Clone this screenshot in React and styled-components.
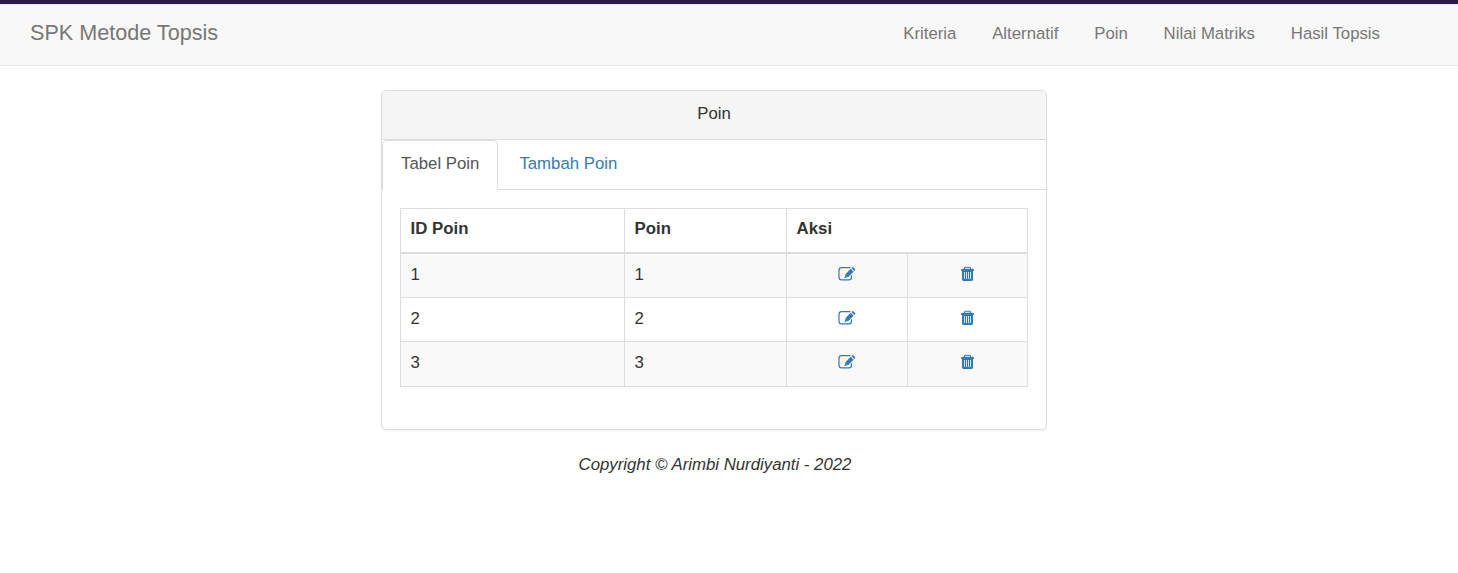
import React from 'react';
import styled, { createGlobalStyle } from 'styled-components';

const GlobalStyle = createGlobalStyle`
  *, *::before, *::after { box-sizing: border-box; }
  body {
    margin: 0;
    background: #fff;
    color: #333;
    font: 16.8px/24px "Liberation Sans", Arial, sans-serif;
  }
`;

const Text = styled.span`
  display: inline-block;
  white-space: nowrap;
`;

const Navbar = styled.nav`
  display: flex;
  justify-content: space-between;
  height: 66px;
  padding: 17px 78px 0 30px;
  background: #f8f8f8;
  border-top: 4px solid #2b1b4e;
  border-bottom: 1px solid #e7e7e7;
  box-shadow: inset 0 1px 0 #e7e7e7;
  color: #777;
`;

const Brand = styled.a`
  font-size: 21.6px;
`;

const Menu = styled.ul`
  display: flex;
  gap: 35.8px;
  margin: 0;
  padding: 1px 0 0;
  list-style: none;
`;

const Panel = styled.section`
  width: 666px;
  height: 340px;
  margin: 24px 0 0 381px;
  background: #fff;
  border: 1px solid #ddd;
  border-radius: 5px;
  box-shadow: 0 1px 1px rgba(0, 0, 0, 0.05);
`;

const PanelHeading = styled.header`
  height: 49px;
  padding-top: 11px;
  background: #f5f5f5;
  border-bottom: 1px solid #ddd;
  border-radius: 4px 4px 0 0;
  text-align: center;
`;

const Tabs = styled.div`
  display: flex;
  height: 50px;
  border-bottom: 1px solid #ddd;
`;

const Tab = styled.a`
  height: 50px;
  padding: 11px 18px 0;
  border: 1px solid ${(p) => (p.$active ? '#ddd' : 'transparent')};
  border-bottom-color: ${(p) => (p.$active ? '#fff' : 'transparent')};
  border-radius: 5px 5px 0 0;
  margin-right: 2px;
  background: ${(p) => (p.$active ? '#fff' : 'transparent')};
  color: ${(p) => (p.$active ? '#555' : '#337ab7')};
`;

const Table = styled.div`
  margin: 18px;
  border: solid #ddd;
  border-width: 1px 0 0 1px;
`;

const Row = styled.div`
  display: grid;
  grid-template-columns: ${(p) => (p.$head ? '224px 162px 241px' : '224px 162px 121px 120px')};
  height: ${(p) => p.$height || 44}px;
  background: ${(p) => (p.$striped ? '#f9f9f9' : '#fff')};
  font-weight: ${(p) => (p.$head ? 700 : 400)};
`;

const Cell = styled.div`
  padding: ${(p) => (p.$head ? '8px' : '9px')} 10px 0 9.6px;
  border: solid #ddd;
  border-width: 0 1px ${(p) => (p.$head ? 2 : 1)}px 0;
`;

const ActionCell = styled(Cell)`
  display: flex;
  justify-content: center;
  padding: 12px 0 0;
  color: #337ab7;
`;

const Icon = styled.svg`
  display: block;
  width: ${(p) => p.$width}px;
  height: 17px;
`;

const Footer = styled.footer`
  width: 666px;
  margin: 23px 0 0 382px;
  font-style: italic;
  text-align: center;
`;

const EditIcon = () => (
  <Icon $width={18} viewBox="0 0 18 17" fill="currentColor">
    <path
      d="M12.4 1.6H3.6Q1 1.6 1 4.2v7q0 2.6 2.6 2.6h7.3q2.6 0 2.6-2.6V9.2"
      fill="none"
      stroke="currentColor"
      strokeWidth="1.2"
    />
    <path d="M12.6 2.8 15.6 5.8 10.6 10.8 6.4 12.2 7.7 7.9Z" />
    <path d="m13.3 2.1.9-.9q.5-.5 1 0l1.9 1.8q.5.5 0 1l-.9.9Z" />
    <path d="m8.2 9.2 1 1-1.2.4Z" fill="#fff" opacity=".5" />
  </Icon>
);

const TrashIcon = () => (
  <Icon $width={17} viewBox="0 0 17 17">
    <path d="M5.6 3.2V2.1q0-.8.8-.8h4.2q.8 0 .8.8v1.1" fill="none" stroke="currentColor" strokeWidth="1.1" />
    <path d="M2 4.4q0-1.6 1.2-1.6h10.6q1.2 0 1.2 1.6v.6H2Z" fill="currentColor" />
    <path
      d="M3 5h11v8.6q0 1.4-1.4 1.4H4.4Q3 15 3 13.6Z M5.1 6v7h.8V6Z M7.1 6v7h.8V6Z M9.1 6v7h.8V6Z M11.1 6v7h.8V6Z"
      fill="currentColor"
      fillRule="evenodd"
    />
  </Icon>
);

const menu = ['Kriteria', 'Alternatif', 'Poin', 'Nilai Matriks', 'Hasil Topsis'];
const points = [
  { id: 1, value: 1 },
  { id: 2, value: 2 },
  { id: 3, value: 3 },
];

export default function App() {
  return (
    <>
      <GlobalStyle />
      <Navbar>
        <Brand><Text>SPK Metode Topsis</Text></Brand>
        <Menu>
          {menu.map((label) => (
            <li key={label}><Text>{label}</Text></li>
          ))}
        </Menu>
      </Navbar>
      <Panel>
        <PanelHeading><Text>Poin</Text></PanelHeading>
        <Tabs>
          <Tab $active><Text>Tabel Poin</Text></Tab>
          <Tab><Text>Tambah Poin</Text></Tab>
        </Tabs>
        <Table>
          <Row $head $height={45}>
            <Cell $head><Text>ID Poin</Text></Cell>
            <Cell $head><Text>Poin</Text></Cell>
            <Cell $head><Text>Aksi</Text></Cell>
          </Row>
          {points.map((point, index) => (
            <Row key={point.id} $striped={index % 2 === 0} $height={index === 2 ? 45 : 44}>
              <Cell>{point.id}</Cell>
              <Cell>{point.value}</Cell>
              <ActionCell><EditIcon /></ActionCell>
              <ActionCell><TrashIcon /></ActionCell>
            </Row>
          ))}
        </Table>
      </Panel>
      <Footer><Text>Copyright © Arimbi Nurdiyanti - 2022</Text></Footer>
    </>
  );
}
